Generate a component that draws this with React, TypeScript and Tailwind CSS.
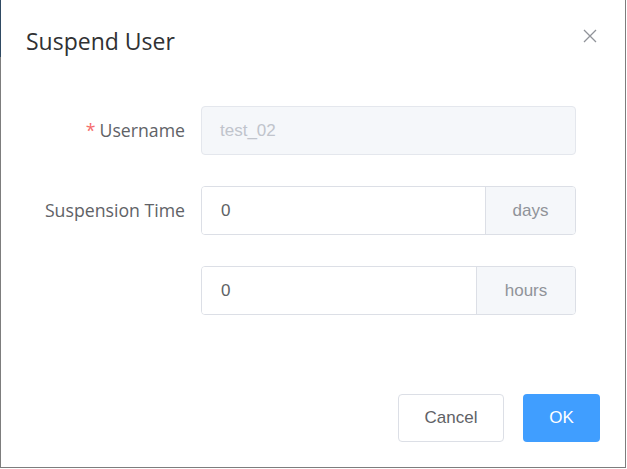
import React from "react";

const labelFont = { fontFamily: '"Open Sans", "Noto Sans", sans-serif' };

const Row = ({
  label,
  required,
  children,
}: {
  label?: string;
  required?: boolean;
  children: React.ReactNode;
}) => (
  <div className="flex items-center h-[49px]">
    <div
      className="w-[200px] pr-4 text-right text-[17.7px] text-[#606266]"
      style={labelFont}
    >
      {required && <span className="text-[#f56c6c] mr-1">*</span>}
      {label}
    </div>
    <div className="w-[375px] h-full">{children}</div>
  </div>
);

const AppendInput = ({ value, unit, unitWidth }: { value: string; unit: string; unitWidth: string }) => (
  <div className="flex h-full rounded border border-[#dcdfe6] overflow-hidden">
    <div className="flex-1 flex items-center pl-[19px] text-[17px] text-[#606266] bg-white">
      {value}
    </div>
    <div
      className={`${unitWidth} flex items-center justify-center border-l border-[#dcdfe6] bg-[#f5f7fa] text-[17px] text-[#909399]`}
    >
      {unit}
    </div>
  </div>
);

const App = () => {
  return (
    <div
      className="w-[626px] h-[468px] bg-white border-l border-r border-b border-[#7d7d7d] flex flex-col relative"
      style={{ fontFamily: '"Liberation Sans", Arial, sans-serif' }}
    >
      {/* edge of the page behind the dialog */}
      <div className="absolute left-[-1px] top-0 w-[1px] h-[57px] bg-[#2f4a63]" />

      {/* Header */}
      <header className="flex items-start justify-between pl-[25px] pr-[28px] pt-[26px]">
        <h1 className="text-[23px] leading-[30px] text-[#303133]" style={labelFont}>
          Suspend User
        </h1>
        <button className="mt-[3px] text-[#909399]">
          <svg width="14" height="14" viewBox="0 0 14 14" fill="none">
            <path d="M1 1L13 13M13 1L1 13" stroke="#909399" strokeWidth="1.3" />
          </svg>
        </button>
      </header>

      {/* Form */}
      <div className="flex flex-col gap-[31px] mt-[50px]">
        <Row label="Username" required>
          <div className="h-full flex items-center pl-[18px] rounded border border-[#e4e7ed] bg-[#f5f7fa] text-[17px] text-[#c0c4cc]">
            test_02
          </div>
        </Row>
        <Row label="Suspension Time">
          <AppendInput value="0" unit="days" unitWidth="w-[90px]" />
        </Row>
        <Row>
          <AppendInput value="0" unit="hours" unitWidth="w-[99px]" />
        </Row>
      </div>

      {/* Footer */}
      <footer className="flex justify-end gap-[19px] pr-[25px] mt-auto mb-[25px]">
        <button className="w-[106px] h-[48px] rounded border border-[#dcdfe6] bg-white text-[17px] text-[#606266]">
          Cancel
        </button>
        <button className="w-[77px] h-[48px] rounded bg-[#409eff] text-[17px] text-white">
          OK
        </button>
      </footer>
    </div>
  );
};

export default App;
